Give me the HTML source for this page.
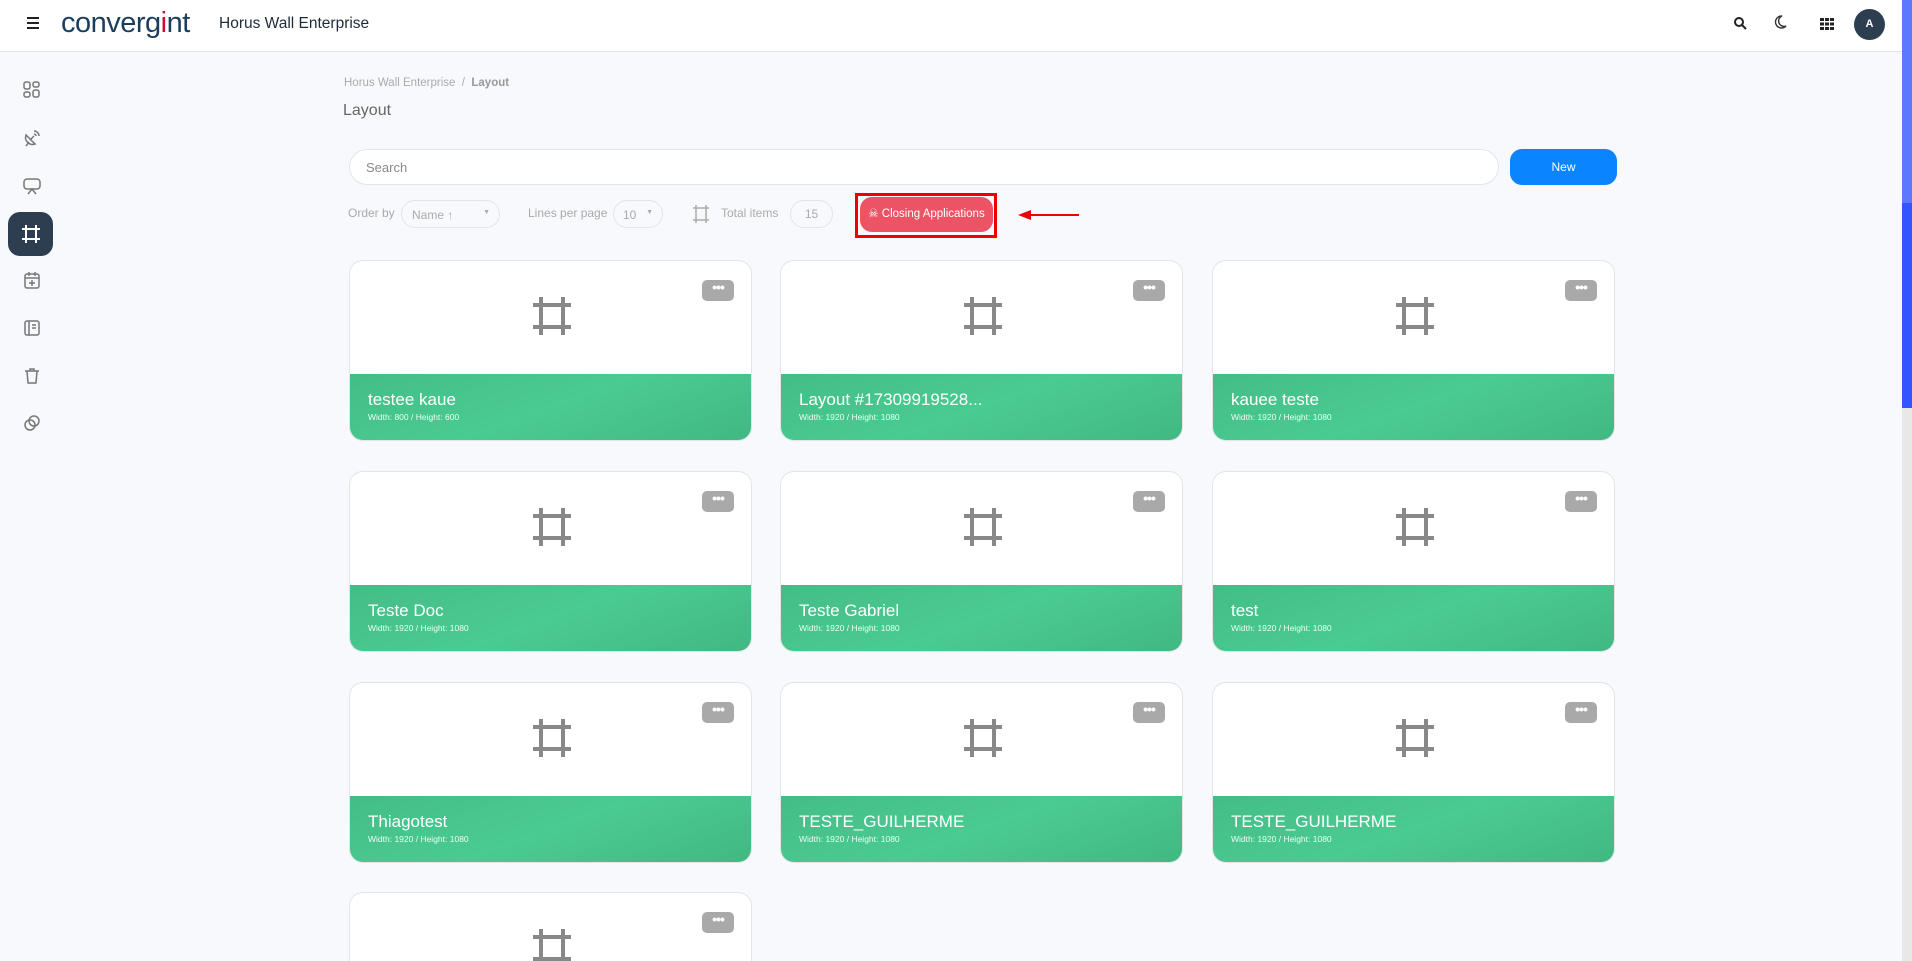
<!DOCTYPE html>
<html style="width:1912px;height:961px;overflow:hidden"><head><meta charset="utf-8"><style>
*{box-sizing:border-box;margin:0;padding:0}
body{width:1912px;height:961px;overflow:hidden;background:#f8f9fc;font-family:"Liberation Sans",sans-serif;position:relative}
.hdr{position:absolute;left:0;top:0;width:1902px;height:52px;background:#fff;border-bottom:1px solid #e4e6ea}
.abs{position:absolute}
.sb{position:absolute;right:0;top:0;width:10px;height:961px;background:#e8e8e8}
.card{position:absolute;width:403px;height:181px;background:#fff;border:1px solid #e2e4e8;border-radius:14px;overflow:hidden}
.card .g{position:absolute;left:0;right:0;top:113px;bottom:0;background:linear-gradient(160deg,#43bd86,#4acb92 50%,#41b882)}
.card .t{position:absolute;left:18px;top:16px;color:#fff;font-size:17px}
.card .s{position:absolute;left:18px;top:38px;color:#e8fff3;font-size:8.5px}
.card .d{position:absolute;left:352px;top:19px;width:32px;height:21px;background:#a9a9a9;border-radius:5px;color:#fff;font-size:14px;line-height:15px;text-align:center;letter-spacing:-1px;font-weight:bold}
.card svg{position:absolute;left:182px;top:35px}
.ic{position:absolute;left:22px}
#clip{position:absolute;left:0;top:0;width:1902px;height:961px;overflow:hidden}
</style></head><body>
<div class="hdr">
 <div class="abs" style="left:27px;top:17px;width:12px;height:2px;background:#222;box-shadow:0 5px 0 #222,0 10px 0 #222"></div>
 <div class="abs" style="left:61px;top:7px;font-size:29px;color:#1c3e5e;letter-spacing:-0.5px">converg<span style="color:#c8102e">i</span>nt</div>
 <div class="abs" style="left:219px;top:15px;font-size:15.5px;color:#1d2b3a">Horus Wall Enterprise</div>
 <svg class="abs" style="left:1733px;top:16px" width="14" height="14" viewBox="0 0 14 14"><circle cx="6" cy="6" r="4" fill="none" stroke="#222" stroke-width="2"/><path d="M9 9l4 4" stroke="#222" stroke-width="2"/></svg>
 <svg class="abs" style="left:1773px;top:15px" width="14" height="15" viewBox="0 0 14 15"><path d="M9 1A6 6 0 1 0 13 11 5 5 0 0 1 9 1z" fill="none" stroke="#333" stroke-width="1.4"/></svg>
 <div class="abs" style="left:1820px;top:18px;width:14px;height:12px;background:repeating-linear-gradient(90deg,#222 0 4px,transparent 4px 5px),#fff;-webkit-mask:repeating-linear-gradient(0deg,#000 0 3px,transparent 3px 4.5px)"></div>
 <div class="abs" style="left:1854px;top:9px;width:31px;height:31px;border-radius:50%;background:#2d3e50;color:#fff;font-size:11px;font-weight:bold;text-align:center;line-height:31px">A</div>
</div>
<div class="sb"><div style="height:203px;background:#5c78ff"></div><div style="height:205px;background:#3355ff"></div></div>

<svg class="ic" style="top:80px" width="20" height="20" viewBox="0 0 20 20" fill="none" stroke="#777" stroke-width="1.5"><rect x="2" y="2" width="6" height="7" rx="2"/><rect x="11" y="2" width="6" height="5" rx="2"/><rect x="2" y="12" width="6" height="5" rx="2"/><rect x="11" y="10" width="6" height="7" rx="2"/></svg>
<svg class="ic" style="top:128px" width="20" height="20" viewBox="0 0 20 20" fill="none" stroke="#777" stroke-width="1.5"><path d="M4 7a7 7 0 0 0 9 9z"/><path d="M8 12l4-4M12 3a5 5 0 0 1 5 5M12 6a2 2 0 0 1 2 2M4 18l3-4"/></svg>
<svg class="ic" style="top:176px" width="20" height="20" viewBox="0 0 20 20" fill="none" stroke="#777" stroke-width="1.5"><rect x="2" y="3" width="16" height="10" rx="3"/><path d="M6 18l4-5 4 5"/></svg>
<div class="abs" style="left:8px;top:212px;width:45px;height:44px;border-radius:12px;background:#2d3e50"></div>
<svg class="ic" style="top:223px;left:20px" width="22" height="22" viewBox="0 0 22 22" fill="none" stroke="#fff" stroke-width="2"><path d="M6 2v18M16 2v18M2 6h18M2 16h18"/></svg>
<svg class="ic" style="top:270px" width="20" height="20" viewBox="0 0 20 20" fill="none" stroke="#777" stroke-width="1.5"><rect x="3" y="4" width="14" height="14" rx="2"/><path d="M3 8h14M7 2v4M13 2v4M10 10v6M7 13h6"/></svg>
<svg class="ic" style="top:318px" width="20" height="20" viewBox="0 0 20 20" fill="none" stroke="#777" stroke-width="1.5"><rect x="3" y="3" width="14" height="14" rx="2"/><path d="M7 3v14M10 7h4M10 10h4"/></svg>
<svg class="ic" style="top:366px" width="20" height="20" viewBox="0 0 20 20" fill="none" stroke="#777" stroke-width="1.5"><path d="M3 5h14M5 5l1 12h8l1-12M8 5V3h4v2"/></svg>
<svg class="ic" style="top:413px" width="20" height="20" viewBox="0 0 20 20" fill="none" stroke="#777" stroke-width="1.5"><circle cx="12" cy="8" r="5"/><circle cx="8" cy="12" r="5"/></svg>

<div class="abs" style="left:344px;top:77px;font-size:11.5px;color:#aaa">Horus Wall Enterprise &nbsp;/&nbsp; <b style="color:#999">Layout</b></div>
<div class="abs" style="left:343px;top:102px;font-size:16px;color:#666">Layout</div>
<div class="abs" style="left:349px;top:149px;width:1150px;height:36px;background:#fff;border:1px solid #e2e4e8;border-radius:18px;font-size:13px;color:#888;padding:10px 0 0 16px">Search</div>
<div class="abs" style="left:1510px;top:149px;width:107px;height:36px;background:#0a84ff;border-radius:12px;color:#fff;font-size:12px;text-align:center;line-height:36px">New</div>

<div class="abs" style="left:348px;top:206px;font-size:12px;color:#aaa">Order by</div>
<div class="abs" style="left:401px;top:200px;width:99px;height:28px;border:1px solid #e2e4e8;border-radius:14px;font-size:12px;color:#aaa;padding:7px 0 0 10px">Name ↑<span style="position:absolute;right:9px;top:8px;font-size:7px">▼</span></div>
<div class="abs" style="left:528px;top:206px;font-size:12px;color:#aaa">Lines per page</div>
<div class="abs" style="left:613px;top:200px;width:50px;height:28px;border:1px solid #e2e4e8;border-radius:14px;font-size:12px;color:#aaa;padding:7px 0 0 9px">10<span style="position:absolute;right:9px;top:8px;font-size:7px">▼</span></div>
<svg class="abs" style="left:692px;top:204px" width="18" height="20" viewBox="0 0 18 20" fill="none" stroke="#aaa" stroke-width="1.5"><path d="M4 1v18M14 1v18M1 4h16M1 16h16"/></svg>
<div class="abs" style="left:721px;top:206px;font-size:12px;color:#aaa">Total items</div>
<div class="abs" style="left:790px;top:200px;width:43px;height:28px;border:1px solid #e2e4e8;border-radius:14px;font-size:12px;color:#aaa;text-align:center;line-height:27px">15</div>
<div class="abs" style="left:855px;top:193px;width:142px;height:45px;border:3px solid #ee0000"></div>
<div class="abs" style="left:860px;top:197px;width:133px;height:35px;background:#ec5466;border-radius:12px;color:#fff;font-size:11.5px;text-align:center;line-height:34px">☠ Closing Applications</div>
<div class="abs" style="left:1030px;top:214px;width:49px;height:2px;background:#e00"></div>
<div class="abs" style="left:1018px;top:210px;width:0;height:0;border-top:5px solid transparent;border-bottom:5px solid transparent;border-right:13px solid #e00"></div>

<div id="clip"></div>
<script>
var d=[["testee kaue","800","600"],["Layout #17309919528...","1920","1080"],["kauee teste","1920","1080"],["Teste Doc","1920","1080"],["Teste Gabriel","1920","1080"],["test","1920","1080"],["Thiagotest","1920","1080"],["TESTE_GUILHERME","1920","1080"],["TESTE_GUILHERME","1920","1080"],["","",""]];
var xs=[349,780,1212],ys=[260,471,682,892],h="";
d.forEach(function(c,i){h+='<div class="card" style="left:'+xs[i%3]+'px;top:'+ys[Math.floor(i/3)]+'px"><div class="d">•••</div><svg width="40" height="40" viewBox="0 0 40 40" fill="none" stroke="#888" stroke-width="4"><path d="M9 1v38M31 1v38M1 9h38M1 31h38"/></svg>'+(c[0]?'<div class="g"><div class="t">'+c[0]+'</div><div class="s">Width: '+c[1]+' / Height: '+c[2]+'</div></div>':'')+'</div>'});
document.getElementById("clip").innerHTML=h;
</script>
</body></html>
